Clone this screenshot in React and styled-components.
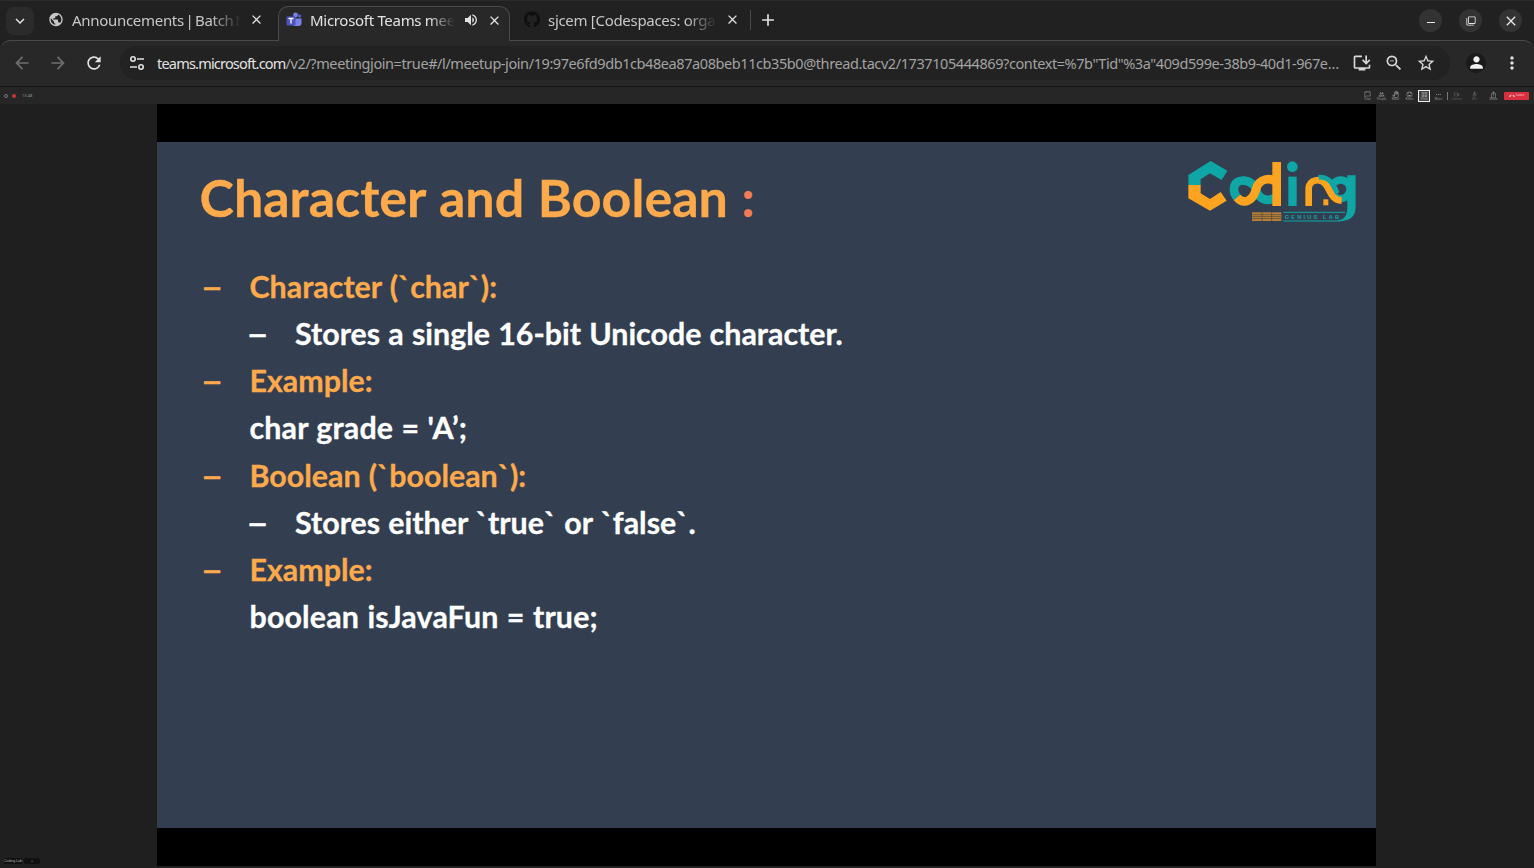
import React from 'react'
import styled, { createGlobalStyle } from 'styled-components'
import {
  MdPublic, MdClose, MdVolumeUp, MdAdd, MdExpandMore, MdArrowBack, MdArrowForward, MdRefresh,
  MdInstallDesktop, MdZoomOut, MdStarBorder, MdPerson, MdMoreVert, MdFilterNone,
  MdOutlineChatBubbleOutline, MdOutlinePeople, MdOutlinePanTool, MdOutlineEmojiEmotions,
  MdOutlineGridView, MdMoreHoriz, MdOutlineVideocam, MdOutlineMic, MdOutlineIosShare, MdCallEnd,
} from 'react-icons/md'
import { FaGithub } from 'react-icons/fa'

const GlobalStyle = createGlobalStyle`
  html, body { margin: 0; padding: 0; height: 100%; background: #1f1f1f; overflow: hidden; }
`

const Page = styled.div`
  width: 1534px;
  height: 868px;
  display: flex;
  flex-direction: column;
  font-family: "Noto Sans", sans-serif;
  background: #1f1f1f;
`

/* browser chrome */
const TabStrip = styled.div`
  height: 40px;
  display: flex;
  align-items: flex-end;
  padding-left: 6px;
  background: #212121;
  border-top: 1px solid #2b2b2b;
  box-sizing: border-box;
  position: relative;
  z-index: 1;
`

const TabSearch = styled.button`
  width: 28px;
  height: 28px;
  margin: 0 8px 5px 0;
  flex: none;
  border: 0;
  padding: 0;
  border-radius: 8px;
  background: #2b2b2b;
  color: #e3e3e3;
  display: flex;
  align-items: center;
  justify-content: center;
  font-size: 18px;
`

const Tab = styled.div`
  width: ${p => p.$width}px;
  height: 35px;
  margin-bottom: -1px;
  flex: none;
  box-sizing: border-box;
  display: flex;
  align-items: center;
  padding: 0 ${p => p.$right}px 8px ${p => p.$left}px;
  gap: 8px;
  color: #c7c7c7;
  ${p => p.$active && `
    background: #282828;
    border: 1px solid #4a4a4a;
    border-bottom: 0;
    border-radius: 10px 10px 0 0;
    color: #e3e3e3;
  `}
`

const TabTitle = styled.span`
  flex: 1;
  min-width: 0;
  white-space: nowrap;
  overflow: hidden;
  font-size: 15px;
  line-height: 20px;
  letter-spacing: -0.3px;
  word-spacing: ${p => p.$wordGap || 0}px;
  mask-image: linear-gradient(to right, #000 82%, transparent 100%);
`

const TabIcon = styled.span`
  width: 16px;
  height: 16px;
  flex: none;
  display: flex;
  align-items: center;
  justify-content: center;
  font-size: 17px;
  color: ${p => p.$color || '#c7c7c7'};
`

const TabAction = styled.span`
  flex: none;
  display: flex;
  font-size: ${p => p.$size || 15}px;
  color: #e3e3e3;
`

const TabDivider = styled.span`
  width: 1px;
  height: 20px;
  margin: 0 7px 10px 8px;
  background: #4a4a4a;
  flex: none;
`

const NewTab = styled.span`
  display: flex;
  margin: 0 0 5px 0;
  padding: 5px 0;
  font-size: 20px;
  color: #e3e3e3;
`

const WindowControls = styled.div`
  margin: 0 12px 8px auto;
  display: flex;
  gap: 17px;
`

const WindowButton = styled.span`
  width: 23px;
  height: 23px;
  border-radius: 50%;
  background: #333333;
  color: #e6e6e6;
  display: flex;
  align-items: center;
  justify-content: center;
  font-size: ${p => p.$size || 14}px;
`

const MinimizeBar = styled.i`
  width: 8px;
  height: 1px;
  margin-top: 3px;
  background: #e6e6e6;
`

const Toolbar = styled.div`
  height: 46px;
  box-sizing: border-box;
  display: flex;
  align-items: center;
  padding: 0 0 2px 4px;
  background: #282828;
  border-top: 1px solid #4a4a4a;
  border-radius: 10px 10px 0 0;
`

const NavIcon = styled.span`
  width: 36px;
  flex: none;
  display: flex;
  justify-content: center;
  font-size: 20px;
  color: ${p => p.$dim ? '#6f6f6f' : '#e3e3e3'};
`

const AddressBar = styled.div`
  width: 1330px;
  height: 34px;
  margin-left: 8px;
  flex: none;
  display: flex;
  align-items: center;
  border-radius: 17px;
  background: #222222;
  box-sizing: border-box;
  padding-left: 5px;
`

const SiteIcon = styled.svg`
  width: 24px;
  height: 24px;
  flex: none;
`

const Url = styled.div`
  width: 1183px;
  margin: 0 6px 0 8px;
  flex: none;
  white-space: nowrap;
  font-size: 14.5px;
  line-height: 20px;
  color: #a3a3a3;
  letter-spacing: -0.42px;
`

const UrlHost = styled.span`
  color: #e3e3e3;
  letter-spacing: -0.8px;
`

const AddressIcon = styled.span`
  width: 32px;
  flex: none;
  display: flex;
  justify-content: center;
  font-size: 20px;
  color: #d8d8d8;
`

const Avatar = styled.span`
  width: 20px;
  height: 20px;
  margin: 0 8px 0 16px;
  border-radius: 50%;
  background: #1a1a1a;
  color: #f0f0f0;
  display: flex;
  align-items: center;
  justify-content: center;
  font-size: 19px;
  flex: none;
`

/* teams meeting bar */
const MeetingBar = styled.div`
  height: 18px;
  box-sizing: border-box;
  display: flex;
  align-items: center;
  padding: 0 5px 0 4px;
  background: #262626;
  border-top: 1px solid #141414;
  color: #8a8a8a;
  font-size: 4px;
  line-height: 4px;
`

const Status = styled.span`
  width: 4px;
  height: 4px;
  margin-right: 4px;
  border-radius: 50%;
  box-sizing: border-box;
  ${p => p.$hollow ? 'border: 1px solid #777;' : `background: ${p.$color};`}
`

const Clock = styled.span`
  margin-left: 2px;
  color: #8f8f8f;
`

const MeetingActions = styled.div`
  margin-left: auto;
  display: flex;
  align-items: center;
  gap: 3px;
`

const MeetingAction = styled.div`
  width: ${p => p.$active ? 12 : 11}px;
  height: ${p => p.$active ? 12 : 13}px;
  margin-right: ${p => p.$trail || 0}px;
  display: flex;
  flex-direction: column;
  align-items: center;
  justify-content: center;
  font-size: 7px;
  color: ${p => p.$muted ? '#5f5f5f' : '#9a9a9a'};
  ${p => p.$active && 'border: 1px solid #eee; box-sizing: border-box; background: #444;'}
`

const ActionLabel = styled.span`
  font-size: 3px;
  line-height: 3px;
`

const BarRule = styled.span`
  width: 1px;
  height: 8px;
  background: #777;
`

const LeaveButton = styled.div`
  width: 25px;
  height: 8px;
  margin-left: 2px;
  border-radius: 1px;
  background: #d9303f;
  color: #f3d6da;
  display: flex;
  align-items: center;
  justify-content: center;
  gap: 1px;
  font-size: 6px;
`

/* shared slide */
const Stage = styled.div`
  flex: 1;
  display: flex;
  justify-content: center;
  position: relative;
  background: #1f1f1f;
`

const Letterbox = styled.div`
  width: 1219px;
  margin-left: -2px;
  height: 762px;
  box-sizing: border-box;
  background: #000;
  padding: 38px 0;
`

const Slide = styled.div`
  height: 686px;
  box-sizing: border-box;
  padding: 19px 20px 0 43px;
  background: #333f50;
  font-family: Lato, sans-serif;
  font-weight: 700;
  -webkit-text-stroke: 0.3px currentColor;
`

const SlideHeader = styled.div`
  display: flex;
  justify-content: space-between;
  align-items: flex-start;
`

const Title = styled.h1`
  margin: 0;
  font-size: 52px;
  line-height: 72px;
  font-weight: 700;
  word-spacing: 1px;
  color: #fdaa4c;
`

const TitleColon = styled.span`
  color: #f47c54;
`

const Logo = styled.svg`
  width: 200px;
  height: 80px;
  margin: -11px -14px 0 0;
  flex: none;
`

const LogoText = styled.text`
  font-family: "Liberation Sans", sans-serif;
  font-size: 17px;
  font-weight: 700;
  letter-spacing: 6.5px;
  fill: ${p => p.$fill};
  -webkit-text-stroke: 0;
`

const Bullets = styled.ul`
  list-style: none;
  margin: 30px 0 0;
  padding: 0;
`

const Bullet = styled.li`
  height: 47.15px;
  display: flex;
  align-items: center;
  padding-left: ${p => p.$level * 45.5}px;
  font-size: 30.4px;
  word-spacing: 0.8px;
  line-height: 47px;
  white-space: nowrap;
  color: ${p => p.$accent ? '#fdaa4c' : '#ffffff'};
`

const Dash = styled.span`
  width: 50px;
  flex: none;
  font-size: 40px;
  font-weight: 400;
  padding-left: 1px;
  box-sizing: border-box;
`

const CodeLine = styled(Bullet)`
  padding-left: 50px;
  letter-spacing: 0.15px;
`

/* window taskbar pills, bottom left */
const StagePills = styled.div`
  position: absolute;
  left: 4px;
  bottom: 4px;
  display: flex;
  gap: 2px;
  color: #b5b5b5;
  font-family: "Liberation Sans", sans-serif;
  font-size: 3.5px;
  line-height: 6px;
  white-space: nowrap;
`

const Pill = styled.span`
  width: ${p => p.$width}px;
  height: 6px;
  display: flex;
  justify-content: center;
  background: #111;
  border-radius: 1px;
`

const meetingActions = [
  [MdOutlineChatBubbleOutline, 'Chat'],
  [MdOutlinePeople, 'People'],
  [MdOutlinePanTool, 'Raise'],
  [MdOutlineEmojiEmotions, 'React'],
  [MdOutlineGridView, 'View', 'active'],
  [MdMoreHoriz, 'More'],
]

const TEAL = '#0fa6a6'
const ORANGE = '#fca31f'

const CodingLogo = () => (
  <Logo viewBox="0 0 600 240" aria-label="Coding Genius Lab">
    {/* hexagon C */}
    <path d="M55 75 L122 33 L172 62 L155 90 L120 70 L92 88 V105 H55 Z" fill={TEAL} />
    <path d="M55 105 H92 V130 L120 147 L152 126 L170 152 L120 182 L55 145 Z" fill={ORANGE} />
    {/* o and d, one infinity loop */}
    <path d="M258 118 C266 152 300 160 325 135" fill="none" stroke={TEAL} strokeWidth="26" />
    <path d="M258 118 C250 88 192 78 192 118 C192 128 195 136 201 142" fill="none" stroke={TEAL} strokeWidth="26" />
    <path d="M201 142 C222 166 250 152 258 118 C266 86 300 78 325 100" fill="none" stroke={ORANGE} strokeWidth="26" />
    <rect x="307" y="36" width="26" height="132" fill={ORANGE} />
    {/* i */}
    <circle cx="367" cy="50" r="16" fill={TEAL} />
    <rect x="355" y="80" width="25" height="88" fill={TEAL} />
    {/* g ring, then the n running into it */}
    <circle cx="512" cy="118" r="28" fill="none" stroke={TEAL} strokeWidth="22" />
    <rect x="460" y="148" width="15" height="18" fill={ORANGE} />
    <path d="M416 168 V116 C416 88 452 82 468 104 C482 124 484 150 515 152" fill="none" stroke={ORANGE} strokeWidth="20" />
    <path d="M446 82 C472 78 488 100 496 116 C498 122 500 126 503 130" fill="none" stroke={TEAL} strokeWidth="14" />
    <path d="M532 76 H557 V172 C557 200 540 214 505 214 L505 210 C525 208 532 195 532 170 Z" fill={TEAL} />
    {/* tagline */}
    <path d="M340 187 H526 M340 213 H510" stroke={TEAL} strokeWidth="3" />
    <LogoText $fill={TEAL} x="344" y="207">GENIUS LAB</LogoText>
    <rect x="246" y="187" width="88" height="26" fill="#b9813a" />
    <path d="M246 194 H334 M246 200 H334 M246 206 H334 M276 187 V213 M305 187 V213" stroke="#4b4437" strokeWidth="2" />
  </Logo>
)

const TeamsIcon = () => (
  <svg width="16" height="16" viewBox="0 0 16 16">
    <circle cx="9.5" cy="3" r="2.4" fill="#7b83eb" />
    <circle cx="13.5" cy="4" r="1.8" fill="#5059c9" />
    <path d="M6 6.5 H15.5 V11 A3 3 0 0 1 12.5 14 H9 A3 3 0 0 1 6 11 Z" fill="#7b83eb" />
    <rect x="0.5" y="4.5" width="9" height="9" rx="1" fill="#4b53bc" />
    <path d="M2.5 6.5 H7.5 M5 6.5 V11.5" stroke="#fff" strokeWidth="1.3" />
  </svg>
)

const SiteControls = () => (
  <SiteIcon viewBox="0 0 24 24" fill="none" stroke="#e3e3e3" strokeWidth="1.6">
    <circle cx="8" cy="8" r="2.2" />
    <path d="M12 8 H19 M5 16 H12" />
    <circle cx="16" cy="16" r="2.2" />
  </SiteIcon>
)

export default function App() {
  return (
    <Page>
      <GlobalStyle />
      <TabStrip>
        <TabSearch><MdExpandMore /></TabSearch>
        <Tab $width={236} $left={6} $right={14}>
          <TabIcon><MdPublic /></TabIcon>
          <TabTitle $wordGap={-2}>Announcements | Batch M</TabTitle>
          <TabAction><MdClose /></TabAction>
        </Tab>
        <Tab $active $width={232} $left={7} $right={7}>
          <TabIcon><TeamsIcon /></TabIcon>
          <TabTitle>Microsoft Teams meet</TabTitle>
          <TabAction $size={16}><MdVolumeUp /></TabAction>
          <TabAction><MdClose /></TabAction>
        </Tab>
        <Tab $width={232} $left={14} $right={2}>
          <TabIcon $color="#0f0f0f"><FaGithub /></TabIcon>
          <TabTitle>sjcem [Codespaces: orga</TabTitle>
          <TabAction><MdClose /></TabAction>
        </Tab>
        <TabDivider />
        <NewTab><MdAdd /></NewTab>
        <WindowControls>
          <WindowButton><MinimizeBar /></WindowButton>
          <WindowButton $size={10}><MdFilterNone /></WindowButton>
          <WindowButton $size={16}><MdClose /></WindowButton>
        </WindowControls>
      </TabStrip>
      <Toolbar>
        <NavIcon $dim><MdArrowBack /></NavIcon>
        <NavIcon $dim><MdArrowForward /></NavIcon>
        <NavIcon><MdRefresh /></NavIcon>
        <AddressBar>
          <SiteControls />
          <Url>
            <UrlHost>teams.microsoft.com</UrlHost>/v2/?meetingjoin=true#/l/meetup-join/19:97e6fd9db1cb48ea87a08beb11cb35b0@thread.tacv2/1737105444869?context=%7b"Tid"%3a"409d599e-38b9-40d1-967e…
          </Url>
          <AddressIcon><MdInstallDesktop /></AddressIcon>
          <AddressIcon><MdZoomOut /></AddressIcon>
          <AddressIcon><MdStarBorder /></AddressIcon>
        </AddressBar>
        <Avatar><MdPerson /></Avatar>
        <NavIcon><MdMoreVert /></NavIcon>
      </Toolbar>
      <MeetingBar>
        <Status $hollow />
        <Status $color="#d13438" />
        <Clock>13:48</Clock>
        <MeetingActions>
          {meetingActions.map(([Icon, label, active]) => (
            <MeetingAction key={label} $active={!!active}>
              <Icon />
              <ActionLabel>{label}</ActionLabel>
            </MeetingAction>
          ))}
          <BarRule />
          <MeetingAction $muted $trail={4}><MdOutlineVideocam /><ActionLabel>Camera</ActionLabel></MeetingAction>
          <MeetingAction $muted $trail={5}><MdOutlineMic /><ActionLabel>Mic</ActionLabel></MeetingAction>
          <MeetingAction><MdOutlineIosShare /><ActionLabel>Share</ActionLabel></MeetingAction>
          <LeaveButton><MdCallEnd /><ActionLabel>Leave</ActionLabel></LeaveButton>
        </MeetingActions>
      </MeetingBar>
      <Stage>
        <Letterbox>
          <Slide>
            <SlideHeader>
              <Title>Character and Boolean <TitleColon>:</TitleColon></Title>
              <CodingLogo />
            </SlideHeader>
            <Bullets>
              <Bullet $level={0} $accent><Dash>–</Dash>Character (`char`):</Bullet>
              <Bullet $level={1}><Dash>–</Dash>Stores a single 16-bit Unicode character.</Bullet>
              <Bullet $level={0} $accent><Dash>–</Dash>Example:</Bullet>
              <CodeLine $level={0}>char grade = 'A’;</CodeLine>
              <Bullet $level={0} $accent><Dash>–</Dash>Boolean (`boolean`):</Bullet>
              <Bullet $level={1}><Dash>–</Dash>Stores either `true` or `false`.</Bullet>
              <Bullet $level={0} $accent><Dash>–</Dash>Example:</Bullet>
              <CodeLine $level={0}>boolean isJavaFun = true;</CodeLine>
            </Bullets>
          </Slide>
        </Letterbox>
        <StagePills>
          <Pill $width={18}>Coding Lab</Pill>
          <Pill $width={16}>+</Pill>
        </StagePills>
      </Stage>
    </Page>
  )
}
